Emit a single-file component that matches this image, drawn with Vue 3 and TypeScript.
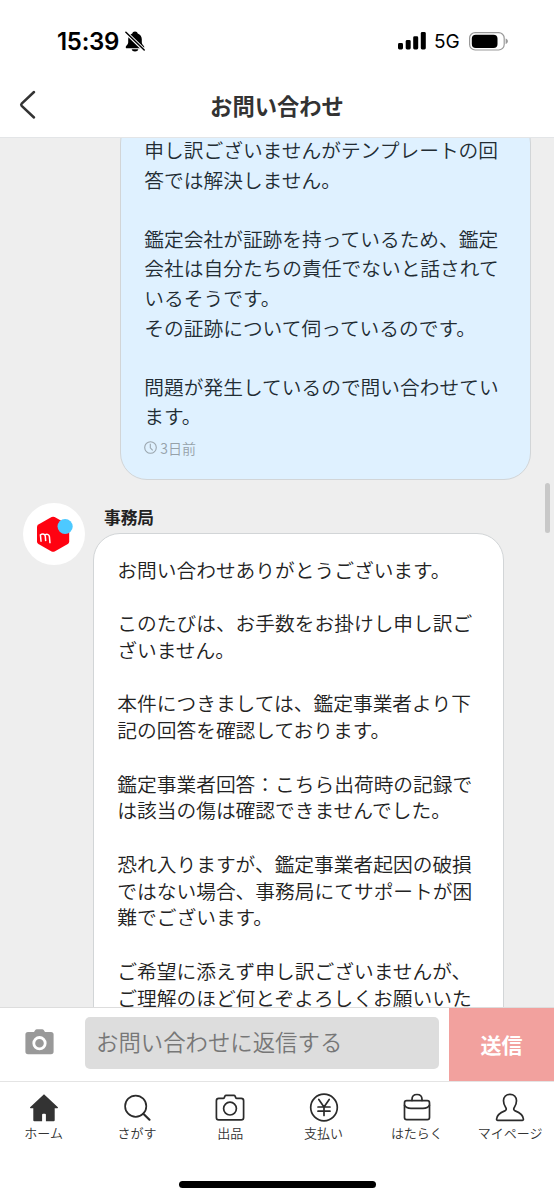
<script setup lang="ts">
interface Tab {
  id: string
  label: string
}

const sentLines: string[] = [
  '申し訳ございませんがテンプレートの回',
  '答では解決しません。',
  '',
  '鑑定会社が証跡を持っているため、鑑定',
  '会社は自分たちの責任でないと話されて',
  'いるそうです。',
  'その証跡について伺っているのです。',
  '',
  '問題が発生しているので問い合わせてい',
  'ます。',
]

const replyLines: string[] = [
  'お問い合わせありがとうございます。',
  '',
  'このたびは、お手数をお掛けし申し訳ご',
  'ざいません。',
  '',
  '本件につきましては、鑑定事業者より下',
  '記の回答を確認しております。',
  '',
  '鑑定事業者回答：こちら出荷時の記録で',
  'は該当の傷は確認できませんでした。',
  '',
  '恐れ入りますが、鑑定事業者起因の破損',
  'ではない場合、事務局にてサポートが困',
  '難でございます。',
  '',
  'ご希望に添えず申し訳ございませんが、',
  'ご理解のほど何とぞよろしくお願いいた',
]

const tabs: Tab[] = [
  { id: 'home', label: 'ホーム' },
  { id: 'search', label: 'さがす' },
  { id: 'sell', label: '出品' },
  { id: 'pay', label: '支払い' },
  { id: 'work', label: 'はたらく' },
  { id: 'me', label: 'マイページ' },
]
</script>

<template>
  <div class="screen">
    <header class="top">
      <div class="status">
        <span class="clock">15:39</span>
        <svg class="bell" width="20" height="21" viewBox="0 0 20 21">
          <path d="M10 .6c-1.500 0-2.500.8-2.700 1.900C4.600 3.500 3.200 5.800 3.200 8.300v2.900c0 1.500-.8 2.400-2 3.700-.8.900-.6 2.400.8 2.400h16c1.400 0 1.600-1.500.8-2.400-1.200-1.300-2-2.200-2-3.700V8.300c0-2.500-1.400-4.800-4.100-5.800C12.500 1.400 11.500.6 10 .6zM6.700 18.300h6.600c-.3 1.400-1.600 2.200-3.300 2.200s-3-.8-3.300-2.200z" fill="#000" />
          <path d="M.2.8 19.800 19.700" stroke="#fff" stroke-width="3.600" />
          <path d="M.9 1.300 19.200 19" stroke="#000" stroke-width="1.500" stroke-linecap="round" />
        </svg>
        <div class="status-right">
          <svg width="28" height="18" viewBox="0 0 28 18">
            <rect x="0" y="11" width="5" height="6.500" rx="1.400" />
            <rect x="7.700" y="8" width="5" height="9.500" rx="1.400" />
            <rect x="15.200" y="4.300" width="5" height="13.200" rx="1.400" />
            <rect x="22.800" y="0" width="5" height="17.500" rx="1.400" />
          </svg>
          <span class="network">5G</span>
          <svg class="battery" width="39" height="19" viewBox="0 0 39 19">
            <rect x=".6" y=".6" width="34.600" height="17.400" rx="5.600" fill="none" stroke="#999" stroke-width="1.200" />
            <rect x="2.800" y="2.700" width="25.700" height="13.200" rx="4" />
            <path d="M36.600 6.500c1.700.7 2.300 1.700 2.300 2.800s-.6 2.100-2.300 2.800z" fill="#999" />
          </svg>
        </div>
      </div>
      <div class="nav">
        <svg class="back" width="18" height="30" viewBox="0 0 18 30">
          <path d="M15 2 2.700 13.600q-1 1.100 0 2.200L15 27.500" fill="none" stroke="#333" stroke-width="2.500" stroke-linecap="round" />
        </svg>
        <h1>お問い合わせ</h1>
      </div>
    </header>

    <main class="chat">
      <section class="bubble sent">
        <p v-for="(line, i) in sentLines" :key="i" class="line">{{ line }}</p>
        <div class="meta">
          <svg width="13" height="13" viewBox="0 0 13 13" fill="none" stroke="#9ba6ae" stroke-width="1.100">
            <circle cx="6.500" cy="6.500" r="5.800" />
            <path d="M6.300 2.800v4l2.400 2.500" />
          </svg>
          <span>3日前</span>
        </div>
      </section>
      <section class="received">
        <div class="avatar">
          <svg width="40" height="40" viewBox="0 0 40 40">
            <path d="M17.600 3.100q1.500-.8 3 0l13.200 7.400q1.400.8 1.400 2.400v14.700q0 1.600-1.400 2.400L20.600 37.400q-1.500.8-3 0L4.400 30Q3 29.200 3 27.600V12.900q0-1.600 1.400-2.400z" fill="#ff0211" />
            <circle cx="31.100" cy="12.500" r="7.600" fill="#4dc9ff" />
            <path d="M7.100 27.800 6.400 20.800q1.900-1.100 3.500-.5 1.200.5 1.400 2l.4 4.800M10.900 20.900q1.800-1 3.200-.3 1.100.5 1.300 2l.6 6.700" fill="none" stroke="#fff" stroke-width="1.500" />
          </svg>
        </div>
        <div class="reply">
          <h2>事務局</h2>
          <div class="bubble white">
            <p v-for="(line, i) in replyLines" :key="i" class="line">{{ line }}</p>
          </div>
        </div>
      </section>
      <div class="scrollbar"></div>
    </main>

    <div class="composer">
      <svg class="camera" width="29" height="26" viewBox="0 0 29 26">
        <path d="M3 3h6l1.300-2q.5-.8 1.500-.8h5.400q1 0 1.500.8L20 3h6q2.600 0 2.600 2.600v17q0 2.600-2.600 2.600H3Q.4 25.200.4 22.600v-17Q.4 3 3 3z" fill="#999" />
        <circle cx="14.500" cy="14.200" r="5.700" fill="none" stroke="#fff" stroke-width="2.800" />
      </svg>
      <div class="field">お問い合わせに返信する</div>
      <button class="send" type="button">送信</button>
    </div>

    <footer class="tabbar">
      <nav class="tabs">
        <div v-for="tab in tabs" :key="tab.id" class="tab">
          <svg width="30" height="30" viewBox="0 0 30 30" fill="none" stroke="#2b2b2b" stroke-width="1.700" stroke-linecap="round" stroke-linejoin="round">
            <path v-if="tab.id === 'home'" d="M15 1.200 28.900 14.300q.4.900-.6 1h-2.600v11.900q0 1.100-1.100 1.100h-7.700v-6.600q0-1-1-1h-1.800q-1 0-1 1v6.600H5.400q-1.100 0-1.100-1.100V15.300H1.700q-1-.1-.6-1z" fill="#333" stroke="none" />
            <g v-else-if="tab.id === 'search'">
              <circle cx="13.700" cy="13.200" r="10.600" />
              <path d="m21.300 20.700 6.200 6" stroke-width="2.200" />
            </g>
            <g v-else-if="tab.id === 'sell'">
              <path d="M3.800 5.400h4.400q.8 0 1.100-.8l.6-1.400q.4-.8 1.200-.8h7.800q.8 0 1.200.8l.6 1.400q.3.800 1.100.8h4.400q2.400 0 2.400 2.400v16.600q0 2.400-2.400 2.400H3.800q-2.400 0-2.400-2.400V7.800q0-2.400 2.400-2.400z" />
              <circle cx="15" cy="15.600" r="6.400" />
            </g>
            <g v-else-if="tab.id === 'pay'">
              <circle cx="15" cy="14.500" r="13.300" />
              <path d="m9.800 6.500 5.200 7.500 5.200-7.500M15 14v8.500M9 14h12M9 18.200h12" />
            </g>
            <g v-else-if="tab.id === 'work'">
              <rect x="2.500" y="7.700" width="25" height="19" rx="2.200" />
              <path d="M10 7.500V6.300q0-4.800 5-4.800t5 4.800v1.200M2.500 12.200q1.500 3.200 6.500 3.200h12q5 0 6.500-3.200" />
            </g>
            <path v-else d="M15 1.300c-3.800 0-6.500 2.700-6.500 6.500 0 2.700 1 5 2.200 6.700 1 1.500.6 2.700-.9 3.400C5.500 19.600 1.900 22.200 1.600 26q-.1 1.400 1.200 1.400h24.400q1.300 0 1.200-1.400c-.3-3.800-3.900-6.400-8.200-8.100-1.500-.7-1.900-1.900-.9-3.400 1.200-1.700 2.200-4 2.200-6.700 0-3.800-2.700-6.500-6.500-6.500z" />
          </svg>
          <span>{{ tab.label }}</span>
        </div>
      </nav>
      <div class="home-indicator"></div>
    </footer>
  </div>
</template>

<style>
body {
  margin: 0;
}
</style>

<style scoped>
.screen {
  width: 554px;
  height: 1200px;
  display: flex;
  flex-direction: column;
  overflow: hidden;
  background: #fff;
  color: #222;
  font-family: "Noto Sans CJK JP", sans-serif;
}

h1,
h2,
p {
  margin: 0;
}

.top {
  flex: none;
  height: 138px;
  border-bottom: 1px solid #e3e5e7;
  box-sizing: border-box;
}

.status {
  display: flex;
  align-items: center;
  height: 82px;
  padding: 0 46px 0 57px;
  box-sizing: border-box;
  color: #000;
}

.clock {
  width: 63px;
  padding-top: 2px;
  font: 600 24px/30px Inter, sans-serif;
  letter-spacing: -0.3px;
  white-space: nowrap;
}

.bell {
  margin-left: 5px;
}

.status-right {
  display: flex;
  align-items: center;
  margin-left: auto;
}

.network {
  width: 27px;
  margin-left: 8px;
  padding-top: 2px;
  font: 400 19px/24px Inter, sans-serif;
}

.battery {
  margin-left: 8px;
}

.nav {
  display: grid;
  grid-template-columns: 60px 1fr 60px;
  align-items: center;
  height: 46px;
}

.back {
  margin-left: 19px;
}

h1 {
  grid-column: 2;
  text-align: center;
  font-size: 22.300px;
  line-height: 30px;
  font-weight: 700;
  color: #333;
}

.chat {
  position: relative;
  flex: none;
  height: 869px;
  overflow: hidden;
  background: #eee;
}

.bubble {
  box-sizing: border-box;
  width: 411px;
  border: 1px solid #d2d5d7;
  font-size: 19.730px;
  font-weight: 350;
}

.line {
  white-space: nowrap;
}

.sent {
  height: 364px;
  margin: -22px 0 0 120px;
  padding: 18px 0 0 23.300px;
  border-radius: 27px;
  background: #dff1ff;
}

.sent .line {
  height: 29.600px;
  line-height: 29.600px;
  color: #222c33;
}

.meta {
  display: flex;
  align-items: center;
  gap: 3px;
  margin-top: 7px;
  font-size: 14px;
  line-height: 20px;
  color: #96a1a9;
}

.received {
  display: flex;
  margin-top: 23px;
}

.avatar {
  flex: none;
  display: flex;
  align-items: center;
  justify-content: center;
  width: 62px;
  height: 62px;
  margin: 0 8px 0 23px;
  border-radius: 50%;
  background: #fff;
}

h2 {
  height: 30px;
  margin-left: 11px;
  font-size: 16.700px;
  line-height: 29px;
  font-weight: 700;
}

.white {
  height: 520px;
  padding: 22.500px 0 0 23.300px;
  border-radius: 27px 27px 0 0;
  background: #fff;
}

.white .line {
  height: 26.750px;
  line-height: 26.750px;
}

.scrollbar {
  position: absolute;
  top: 345px;
  right: 4px;
  width: 5px;
  height: 50px;
  border-radius: 3px;
  background: #c8c8c8;
}

.composer {
  flex: none;
  display: flex;
  align-items: flex-start;
  height: 75px;
  box-sizing: border-box;
  border-top: 1px solid #ddd;
  border-bottom: 1px solid #e4e4e4;
}

.camera {
  flex: none;
  margin: 21px 31px 0 25px;
}

.field {
  flex: none;
  width: 354px;
  height: 52px;
  margin-top: 9px;
  padding-left: 11px;
  box-sizing: border-box;
  border-radius: 5px;
  background: #ddd;
  color: #777;
  font-size: 22.400px;
  font-weight: 350;
  line-height: 49px;
}

.send {
  width: 105px;
  height: 73px;
  margin-left: auto;
  padding: 0;
  border: 0;
  background: #f2a19e;
  color: #fff;
  font: 700 21px/71px "Noto Sans CJK JP", sans-serif;
}

.tabbar {
  flex: 1;
}

.tabs {
  display: grid;
  grid-template-columns: repeat(6, 93.300px);
  width: 560px;
  margin-left: -3px;
  padding-top: 11px;
}

.tab {
  display: flex;
  flex-direction: column;
  align-items: center;
  font-size: 13px;
  font-weight: 350;
  line-height: 20px;
  color: #333;
  white-space: nowrap;
}

.home-indicator {
  width: 197px;
  height: 7px;
  margin: 38px auto 0;
  border-radius: 4px;
  background: #000;
}
</style>
